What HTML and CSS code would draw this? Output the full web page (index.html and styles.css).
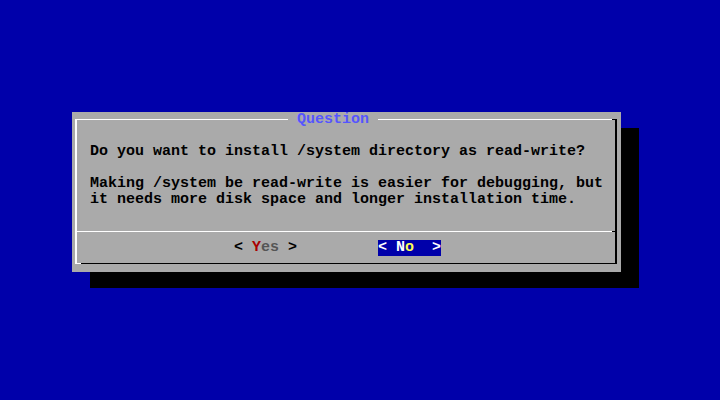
FILE: index.html
```html
<!DOCTYPE html>
<html>
<head>
<meta charset="utf-8">
<link rel="stylesheet" href="styles.css">
</head>
<body>
<div class="screen">
  <div class="dialog">
    <div class="frame">
      <span class="title"> Question </span>
      <div class="msg">
        <p class="line">Do you want to install /system directory as read-write?</p>
        <p class="line para">Making /system be read-write is easier for debugging, but
it needs more disk space and longer installation time.</p>
      </div>
      <div class="sep"></div>
      <div class="buttons">
        <span class="btn"><span class="br">&lt; </span><span class="key">Y</span><span class="lbl">es</span><span class="br"> &gt;</span></span>
        <span class="btn active"><span class="br">&lt; </span><span class="key">N</span><span class="lbl">o</span><span class="br">  &gt;</span></span>
      </div>
    </div>
  </div>
</div>
</body>
</html>
```
FILE: styles.css
```css
html, body {
  margin: 0;
  padding: 0;
}
body {
  background: #0000aa;
  width: 720px;
  height: 400px;
  overflow: hidden;
  font-family: "Liberation Mono", "DejaVu Sans Mono", monospace;
  font-weight: bold;
  font-size: 15px;
  line-height: 16px;
  color: #000;
}
.screen {
  padding: 112px 0 0 72px;
}
.dialog {
  width: 549px;
  height: 160px;
  box-sizing: border-box;
  background: #aaaaaa;
  box-shadow: 18px 16px 0 0 #000;
  padding: 7px 4px 8px 3px;
}
.frame {
  position: relative;
  height: 100%;
  box-sizing: border-box;
  border-style: solid;
  border-width: 1px 2px 1px 2px;
  border-color: #ffffff #000000 #000000 #ffffff;
}
.frame::before {
  content: "";
  position: absolute;
  top: -1px;
  right: -2px;
  width: 5px;
  height: 1px;
  background: #000;
}
.frame::after {
  content: "";
  position: absolute;
  bottom: -1px;
  left: -2px;
  width: 6px;
  height: 1px;
  background: #fff;
}
.title {
  position: absolute;
  top: -8px;
  left: 211px;
  height: 16px;
  background: #aaaaaa;
  color: #5555ff;
  white-space: pre;
}
.msg {
  padding: 24px 0 0 13px;
}
.line {
  margin: 0;
  white-space: pre;
}
.para {
  margin-top: 16px;
}
.sep {
  margin-top: 23px;
  height: 1px;
  background: #fff;
  border-right: 3px solid #000;
}
.buttons {
  display: flex;
  gap: 81px;
  margin-top: 8px;
  padding-left: 157px;
  height: 16px;
}
.btn {
  white-space: pre;
  height: 16px;
}
.btn .key {
  color: #aa0000;
}
.btn .lbl {
  color: #555555;
}
.btn.active {
  background: #0000aa;
  color: #ffffff;
}
.btn.active .key {
  color: #ffffff;
}
.btn.active .lbl {
  color: #ffff55;
}
```
